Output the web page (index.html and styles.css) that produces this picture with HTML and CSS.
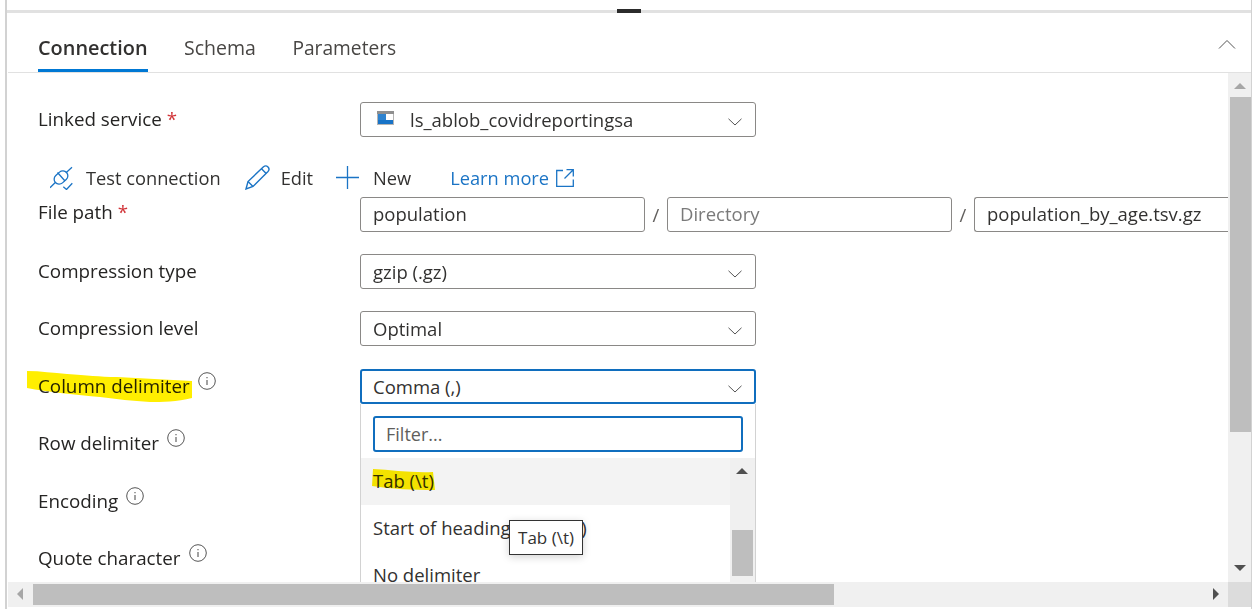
FILE: index.html
```html
<!DOCTYPE html>
<html lang="en">
<head>
    <meta charset="UTF-8">
    <title>Dataset - Connection</title>
    <link rel="stylesheet" href="styles.css">
</head>
<body>
    <div class="panel">
        <div class="strip"><div class="grip"></div></div>
        <div class="tabs">
            <div class="tab active">Connection</div>
            <div class="tab">Schema</div>
            <div class="tab params">Parameters</div>
            <svg class="collapse" width="18" height="10" viewBox="0 0 18 10"><path d="M1 9.500L9 1.500L17 9.500" fill="none" stroke="#555" stroke-width="1"/></svg>
        </div>

        <div class="body">
            <div class="form">
                <div class="row">
                    <div class="label">Linked service <span class="req">*</span></div>
                    <div class="select icon-select">
                        <svg class="blob" width="17" height="14" viewBox="0 0 17 14">
                            <rect width="17" height="14" fill="#b4b4b4"/>
                            <rect width="17" height="3" fill="#8f8f8f"/>
                            <rect x="1" y="3" width="15" height="10" fill="#fff"/>
                            <rect x="1" y="3" width="8" height="6" fill="#2f83cf"/>
                            <rect x="1" y="9" width="15" height="4" fill="#1873c7"/>
                        </svg>
                        <span>ls_ablob_covidreportingsa</span>
                        <svg class="chev" width="14" height="8" viewBox="0 0 14 8"><path d="M.5.800L7 7L13.500.800" fill="none" stroke="#555" stroke-width="1"/></svg>
                    </div>
                </div>

                <div class="actions">
                    <div class="action test">
                        <svg width="24" height="24" viewBox="0 0 24 24" fill="none" stroke="#1b74c5" stroke-width="1.300">
                            <rect x="3.500" y="6.500" width="15" height="10" rx="5" transform="rotate(-42 11 11.500)"/>
                            <path d="M7.500 6.500L15 15M0 21.700L5.300 16.500M16 6.700L22 1.300"/>
                            <path d="M13.300 20.800L16.500 23.500L22.300 17.300"/>
                        </svg>
                        <span>Test connection</span>
                    </div>
                    <div class="action edit">
                        <svg width="25" height="25" viewBox="0 0 25 25" fill="none" stroke="#1b74c5" stroke-width="1.400">
                            <path d="M1 24L3 16.500L18.500 1.800C19.800.700 21.800.800 23 2C24.200 3.300 24.200 5.200 23 6.500L8 21.500Z"/>
                            <path d="M3 16.500L8 21.500M16.500 3.800L21.200 8.400"/>
                        </svg>
                        <span>Edit</span>
                    </div>
                    <div class="action new">
                        <svg width="23" height="23" viewBox="0 0 23 23"><path d="M11.500 0V23M0 11.500H23" fill="none" stroke="#1b74c5" stroke-width="1.300"/></svg>
                        <span>New</span>
                    </div>
                    <div class="learn">
                        <span>Learn more</span>
                        <svg width="18" height="18" viewBox="0 0 18 18" fill="none" stroke="#1b74c5" stroke-width="1.300"><path d="M7 1.500H.700V17.300H17.300V10.500M10.500.700H17.300V7.500M17 1L8.500 9.500"/></svg>
                    </div>
                </div>

                <div class="row">
                    <div class="label nudge">File path <span class="req">*</span></div>
                    <div class="input">population</div>
                    <div class="slash">/</div>
                    <div class="input placeholder">Directory</div>
                    <div class="slash">/</div>
                    <div class="input last">population_by_age.tsv.gz</div>
                </div>

                <div class="row">
                    <div class="label">Compression type</div>
                    <div class="select">
                        <span>gzip (.gz)</span>
                        <svg class="chev" width="14" height="8" viewBox="0 0 14 8"><path d="M.5.800L7 7L13.500.800" fill="none" stroke="#555" stroke-width="1"/></svg>
                    </div>
                </div>

                <div class="row">
                    <div class="label">Compression level</div>
                    <div class="select">
                        <span>Optimal</span>
                        <svg class="chev" width="14" height="8" viewBox="0 0 14 8"><path d="M.5.800L7 7L13.500.800" fill="none" stroke="#555" stroke-width="1"/></svg>
                    </div>
                </div>

                <div class="row">
                    <div class="label">
                        <span class="marked">Column delimiter
                            <svg class="mark mark-col" width="166" height="32" viewBox="0 0 166 32"><path d="M0 0C14 0 26 2 40 3C60 4 72 6 90 6C115 7 140 9 165 10L165 27C150 31 135 31 123 31C105 30 90 28 73 26C50 24 20 21 0 17Z" fill="#ffee00"/></svg>
                        </span>
                        <svg class="info" width="18" height="18" viewBox="0 0 18 18"><circle cx="9" cy="9" r="8.300" fill="none" stroke="#555" stroke-width="1"/><path d="M9 8V13M9 5V6.300" stroke="#555" stroke-width="1.100"/></svg>
                    </div>
                    <div class="select open">
                        <span>Comma (,)</span>
                        <svg class="chev" width="14" height="8" viewBox="0 0 14 8"><path d="M.5.800L7 7L13.500.800" fill="none" stroke="#555" stroke-width="1"/></svg>

                        <div class="dropdown">
                            <div class="filter-wrap"><div class="filter">Filter...</div></div>
                            <div class="list">
                                <div class="options">
                                    <div class="option hover">
                                        <span class="marked">Tab (\t)
                                            <svg class="mark mark-tab" width="63" height="22" viewBox="0 0 63 22"><path d="M1 0C20 1 40 4 61 3L63 21C40 21 20 20 0 17Z" fill="#ffee00"/></svg>
                                        </span>
                                    </div>
                                    <div class="option">Start of heading (\u0001)</div>
                                    <div class="option">No delimiter</div>
                                </div>
                                <div class="list-scroll">
                                    <svg class="list-up" width="12" height="6" viewBox="0 0 12 6"><path d="M6 0L12 6H0Z" fill="#505050"/></svg>
                                    <div class="list-thumb"></div>
                                </div>
                            </div>
                            <div class="tooltip">Tab (\t)</div>
                        </div>
                    </div>
                </div>

                <div class="row">
                    <div class="label">Row delimiter
                        <svg class="info" width="18" height="18" viewBox="0 0 18 18"><circle cx="9" cy="9" r="8.300" fill="none" stroke="#555" stroke-width="1"/><path d="M9 8V13M9 5V6.300" stroke="#555" stroke-width="1.100"/></svg>
                    </div>
                </div>
                <div class="row">
                    <div class="label">Encoding
                        <svg class="info" width="18" height="18" viewBox="0 0 18 18"><circle cx="9" cy="9" r="8.300" fill="none" stroke="#555" stroke-width="1"/><path d="M9 8V13M9 5V6.300" stroke="#555" stroke-width="1.100"/></svg>
                    </div>
                </div>
                <div class="row">
                    <div class="label">Quote character
                        <svg class="info" width="18" height="18" viewBox="0 0 18 18"><circle cx="9" cy="9" r="8.300" fill="none" stroke="#555" stroke-width="1"/><path d="M9 8V13M9 5V6.300" stroke="#555" stroke-width="1.100"/></svg>
                    </div>
                </div>
            </div>

            <div class="vscroll">
                <svg class="arrow-up" width="12" height="6" viewBox="0 0 12 6"><path d="M6 0L12 6H0Z" fill="#a6a6a6"/></svg>
                <div class="vthumb"></div>
                <svg class="arrow-down" width="12" height="6" viewBox="0 0 12 6"><path d="M6 6L12 0H0Z" fill="#505050"/></svg>
            </div>
        </div>

        <div class="hscroll">
            <svg class="arrow-left" width="6" height="12" viewBox="0 0 6 12"><path d="M0 6L6 0V12Z" fill="#a6a6a6"/></svg>
            <div class="hthumb"></div>
            <svg class="arrow-right" width="6" height="12" viewBox="0 0 6 12"><path d="M6 6L0 0V12Z" fill="#505050"/></svg>
            <div class="corner"></div>
        </div>
    </div>
</body>
</html>
```

FILE: styles.css
```css
* {
    box-sizing: border-box;
}

body {
    margin: 0;
    height: 609px;
    overflow: hidden;
    background-color: #fff;
    font-family: "Open Sans", "Noto Sans", sans-serif;
    font-size: 18.5px;
    color: #323130;
}

.panel {
    margin-left: 5px;
    width: 1247px;
    height: 609px;
    padding-top: 10px;
    padding-left: 1px;
    border-left: 2px solid #d2d2d2;
    border-right: 1px solid #d2d2d2;
}

.strip {
    height: 3px;
    margin-left: -1px;
    background-color: #e1e1e1;
    position: relative;
}

.grip {
    position: absolute;
    top: -1px;
    left: 610px;
    width: 24px;
    height: 4px;
    background-color: #2b2b2b;
}

/* tabs */
.tabs {
    display: flex;
    height: 60px;
    padding-left: 30px;
    gap: 36.5px;
    border-bottom: 1px solid #e1e1e1;
    align-items: stretch;
}

.tab {
    display: flex;
    align-items: center;
    padding-top: 13px;
    font-size: 19.5px;
    color: #484644;
    border-bottom: 3px solid transparent;
}

.tab.active {
    font-size: 19.9px;
    font-weight: 600;
    color: #323130;
    border-bottom-color: #0078d4;
}

.tab.params {
    font-size: 19.2px;
}

.collapse {
    margin-left: auto;
    margin-right: 15px;
    align-self: center;
    margin-top: 3px;
}

/* form */
.body {
    display: flex;
    height: 509px;
}

.form {
    flex: 1;
    min-width: 0;
    overflow: hidden;
    padding: 29px 0 0 30px;
}

.row {
    display: flex;
    align-items: center;
    height: 35px;
    margin-bottom: 22.4px;
}

.label {
    flex: none;
    width: 322px;
    display: flex;
    align-items: center;
    padding-bottom: 1px;
    font-size: 18.8px;
    font-weight: 500;
    color: #252423;
    white-space: nowrap;
}

.nudge {
    margin-top: -4px;
}

.req {
    color: #d13438;
    margin-left: 5px;
}

.select,
.input {
    height: 35px;
    border: 1px solid #8a8886;
    border-radius: 3px;
    padding: 0 12px;
    display: flex;
    align-items: center;
    background-color: #fff;
    white-space: nowrap;
}

.select {
    width: 396px;
    position: relative;
}

.icon-select {
    padding-left: 16px;
}

.blob {
    margin-right: 16px;
    margin-top: -4px;
}

.chev {
    position: absolute;
    right: 13px;
    top: 15px;
}

.select.open {
    border: 2px solid #106ebe;
    padding-left: 11px;
}

.open .chev {
    right: 12px;
    top: 14px;
}

.info {
    margin-left: 8px;
    margin-top: -10px;
}

.marked {
    position: relative;
    display: inline-block;
}

.mark {
    position: absolute;
    mix-blend-mode: multiply;
}

.mark-col {
    left: -11px;
    top: -2px;
}

.mark-tab {
    left: -1px;
    top: 1px;
}

/* actions */
.actions {
    display: flex;
    align-items: center;
    height: 37.2px;
    padding-left: 12px;
    font-size: 18.25px;
}

.action,
.learn {
    display: flex;
    align-items: center;
}

.action span {
    margin-left: 12px;
}

.test {
    margin-right: 24px;
}

.edit {
    margin-right: 23px;
}

.edit span {
    margin-left: 11px;
}

.new span {
    margin-left: 14px;
}

.new {
    margin-right: 39px;
}

.learn {
    color: #1b74c5;
    gap: 7px;
}

/* file path */
.input {
    flex: none;
    width: 285px;
    padding-bottom: 2px;
}

.input.last {
    width: 300px;
    border-right: none;
    border-radius: 3px 0 0 3px;
}

.placeholder {
    color: #7a7a7a;
}

.slash {
    flex: none;
    width: 22px;
    text-align: center;
    color: #605e5c;
}

/* dropdown */
.dropdown {
    position: absolute;
    top: 33px;
    left: -2px;
    width: 396px;
    height: 240px;
    background-color: #fff;
    border-left: 1px solid #d2d2d2;
    border-right: 1px solid #d2d2d2;
}

.filter-wrap {
    padding: 12px 12px 6px;
}

.filter {
    height: 36px;
    border: 2px solid #106ebe;
    border-radius: 3px;
    padding: 1px 0 0 11px;
    display: flex;
    align-items: center;
    font-size: 18px;
    color: #605e5c;
}

.list {
    display: flex;
}

.options {
    flex: 1;
    min-width: 0;
}

.option {
    height: 47px;
    padding: 0 0 2px 12px;
    display: flex;
    align-items: center;
    white-space: nowrap;
    overflow: hidden;
}

.option.hover {
    background-color: #f3f3f3;
}

.list-scroll {
    flex: none;
    width: 25px;
    height: 180px;
    background-color: #f0f0f0;
    position: relative;
}

.list-up {
    position: absolute;
    top: 10px;
    left: 6px;
}

.list-thumb {
    position: absolute;
    top: 72px;
    left: 2px;
    width: 21px;
    height: 46px;
    background-color: #bebebe;
}

.tooltip {
    position: absolute;
    top: 116px;
    left: 148px;
    width: 74px;
    height: 35px;
    border: 1px solid #333;
    background-color: #fff;
    font-size: 17px;
    display: flex;
    align-items: center;
    justify-content: center;
    box-shadow: 0 2px 8px rgba(0, 0, 0, 0.18);
}

/* scrollbars */
.vscroll {
    flex: none;
    width: 23px;
    background-color: #f0f0f0;
    position: relative;
}

.arrow-up {
    position: absolute;
    top: 10px;
    left: 6px;
}

.vthumb {
    position: absolute;
    top: 24px;
    left: 2px;
    width: 21px;
    height: 335px;
    background-color: #bebebe;
}

.arrow-down {
    position: absolute;
    bottom: 11px;
    left: 6px;
}

.hscroll {
    height: 25px;
    background-color: #f0f0f0;
    position: relative;
}

.arrow-left {
    position: absolute;
    left: 9px;
    top: 6px;
}

.hthumb {
    position: absolute;
    left: 25px;
    top: 2px;
    width: 801px;
    height: 21px;
    background-color: #bebebe;
}

.arrow-right {
    position: absolute;
    right: 32px;
    top: 6px;
}

.corner {
    position: absolute;
    right: 0;
    top: 0;
    width: 23px;
    height: 25px;
    background-color: #dcdcdc;
}
```
